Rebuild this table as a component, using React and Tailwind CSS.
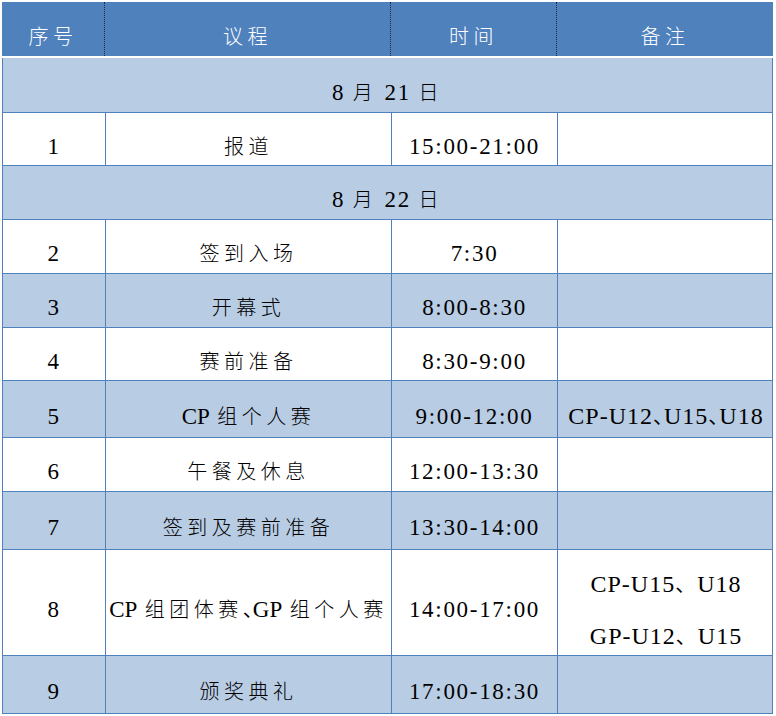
import React from "react";

const COLS = "grid grid-cols-[103px_286px_166px_216px]";

const ROWS = [
  { date: "8 月 21 日", h: "h-[55px]" },
  { no: "1", item: "报道", time: "15:00-21:00", h: "h-[53px]" },
  { date: "8 月 22 日", h: "h-[54px]" },
  { no: "2", item: "签到入场", time: "7:30", h: "h-[54px]" },
  { no: "3", item: "开幕式", time: "8:00-8:30", h: "h-[54px]", alt: true },
  { no: "4", item: "赛前准备", time: "8:30-9:00", h: "h-[53px]" },
  { no: "5", item: "CP 组个人赛", time: "9:00-12:00", note: ["CP-U12、U15、U18"], dun: "tracking-[-9px]", h: "h-[57px]", alt: true },
  { no: "6", item: "午餐及休息", time: "12:00-13:30", h: "h-[54px]" },
  { no: "7", item: "签到及赛前准备", time: "13:30-14:00", h: "h-[58px]", alt: true },
  { no: "8", item: "CP 组团体赛、GP 组个人赛", itemDun: "tracking-[-10px]", time: "14:00-17:00", note: ["CP-U15、U18", "GP-U12、U15"], dun: "tracking-[2px]", h: "h-[106px]" },
  { no: "9", item: "颁奖典礼", time: "17:00-18:30", h: "h-[58px]", alt: true },
];

const RUN = /[\u4e00-\u9fff]+|、+|[A-Za-z]+|[^\u4e00-\u9fff、A-Za-z]+/g;

// Word-style character grid: full-width and half-width glyphs get their own spacing
function T({ text, big, dun = "tracking-[-6px]" }) {
  const runs = text.match(RUN) || [];
  return (
    <span className="whitespace-nowrap">
      {runs.map((r, i) => {
        let cls;
        if (/[\u4e00-\u9fff]/.test(r)) cls = "text-[20px] font-light tracking-[4.5px]";
        else if (r[0] === "、") cls = `text-[20px] ${dun}`;
        else if (/[A-Za-z]/.test(r)) cls = big ? "text-[24px] tracking-[1px]" : "text-[23px] tracking-[0px]";
        else cls = big ? "text-[24px] tracking-[1px]" : "text-[23px] tracking-[1.7px]";
        return <span key={i} className={cls}>{r}</span>;
      })}
    </span>
  );
}

function Cell({ children, last }) {
  return (
    <div className={`flex items-center justify-center pt-[15px] ${last ? "" : "border-r border-[#4f81bd]"}`}>
      {children}
    </div>
  );
}

export default function App() {
  return (
    <div
      className="bg-white w-[776px] h-[716px] pt-[2px] pl-[2px] text-[20px] leading-[30px] text-black"
      style={{ fontFamily: '"Liberation Serif", "Noto Sans CJK SC", serif' }}
    >
      <div className="w-[771px]">
        <div className={`${COLS} h-[54px] bg-[#4f81bd] text-white`}>
          {["序号", "议程", "时间", "备注"].map((h, i) => (
            <div
              key={h}
              className={`flex items-center justify-center pt-[15px] ${i < 3 ? "border-r border-dotted border-[#1f2937]" : ""}`}
            >
              <T text={h} />
            </div>
          ))}
        </div>
        <div className="h-[2px] bg-white" />
        <div className="border-l border-[#4f81bd]">
          {ROWS.map((r, i) =>
            r.date ? (
              <div
                key={i}
                className={`${r.h} flex items-center justify-center pt-[15px] bg-[#b8cce4] border-b border-r border-[#4f81bd]`}
              >
                <T text={r.date} />
              </div>
            ) : (
              <div
                key={i}
                className={`${COLS} ${r.h} border-b border-r border-[#4f81bd] ${r.alt ? "bg-[#b8cce4]" : "bg-white"}`}
              >
                <Cell><T text={r.no} /></Cell>
                <Cell><T text={r.item} dun={r.itemDun} /></Cell>
                <Cell><T text={r.time} /></Cell>
                <Cell last>
                  {r.note && (
                    <div className="flex flex-col items-center gap-[21px]">
                      {r.note.map((n) => (
                        <T key={n} text={n} big dun={r.dun} />
                      ))}
                    </div>
                  )}
                </Cell>
              </div>
            )
          )}
        </div>
      </div>
    </div>
  );
}
